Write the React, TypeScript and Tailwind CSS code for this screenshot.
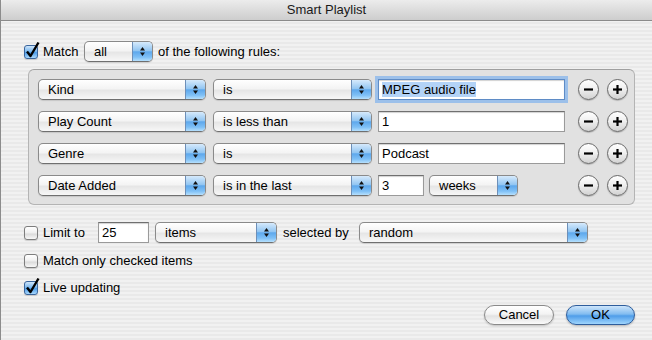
import React from 'react'

const font = { fontFamily: '"Liberation Sans", Arial, sans-serif' }

function Arrows() {
  return (
    <svg width="5" height="9" viewBox="0 0 5 9">
      <path d="M2.5 0L5 3.5H0Z" fill="#111" />
      <path d="M0 5.5H5L2.5 9Z" fill="#111" />
    </svg>
  )
}

function Popup({ label, className = '' }: { label: string; className?: string }) {
  return (
    <div
      className={`flex h-[21px] shrink-0 items-stretch overflow-hidden rounded-[5px] border border-[#8a8a8a] border-b-[#6f6f6f] bg-[linear-gradient(to_bottom,#ffffff_0%,#f4f4f4_45%,#e6e6e6_55%,#f7f7f7_100%)] shadow-[0_1px_1px_rgba(0,0,0,0.12)] ${className}`}
    >
      <span className="flex flex-1 items-center pl-[9px] text-[13px] leading-none text-black">{label}</span>
      <span className="flex w-[20px] items-center justify-center border-l border-[#6d8fb8] bg-[linear-gradient(to_bottom,#d6eafc_0%,#93c6f2_45%,#5ea8ec_52%,#7fc0f6_80%,#b6e0fd_100%)]">
        <Arrows />
      </span>
    </div>
  )
}

function Field({ value, className = '', focused = false }: { value: string; className?: string; focused?: boolean }) {
  return (
    <div
      className={`flex h-[21px] shrink-0 items-center border bg-white pl-[3px] text-[13px] leading-none text-black shadow-[inset_0_1px_1px_rgba(0,0,0,0.18)] ${
        focused
          ? 'border-[#5f8cc6] ring-[3px] ring-[#9cc0ea]'
          : 'border-[#9a9a9a] border-t-[#707070]'
      } ${className}`}
    >
      {focused ? <span className="bg-[#b3d3f7] py-[1px]">{value}</span> : value}
    </div>
  )
}

function RoundButton({ plus }: { plus?: boolean }) {
  return (
    <div className="flex size-[21px] items-center justify-center rounded-full border border-[#6a6a6a] bg-[linear-gradient(to_bottom,#ffffff_0%,#f0f0f0_45%,#d2d2d2_100%)] shadow-[0_1px_1px_rgba(0,0,0,0.2)]">
      <svg width="11" height="11" viewBox="0 0 11 11">
        <path d="M1 5.5H10" stroke="#000" strokeWidth="2.2" />
        {plus && <path d="M5.5 1V10" stroke="#000" strokeWidth="2.2" />}
      </svg>
    </div>
  )
}

function Checkbox({ checked }: { checked?: boolean }) {
  return (
    <div className="relative size-[14px] shrink-0">
      <div
        className={`size-[14px] rounded-[3px] border shadow-[0_1px_1px_rgba(0,0,0,0.15)] ${
          checked
            ? 'border-[#3a659c] bg-[linear-gradient(to_bottom,#cfe6fb_0%,#7ab8ef_45%,#4e9ce8_55%,#a8d8fd_100%)]'
            : 'border-[#7d7d7d] bg-[linear-gradient(to_bottom,#ffffff_0%,#f1f1f1_45%,#dcdcdc_60%,#f8f8f8_100%)]'
        }`}
      />
      {checked && (
        <svg className="absolute -top-[4px] left-0" width="17" height="18" viewBox="0 0 17 18">
          <path d="M3 10.5L6.5 15L14.5 1.5" stroke="#000" strokeWidth="2.4" fill="none" strokeLinejoin="round" />
        </svg>
      )}
    </div>
  )
}

const rules = [
  { field: 'Kind', op: 'is', value: 'MPEG audio file', focused: true },
  { field: 'Play Count', op: 'is less than', value: '1' },
  { field: 'Genre', op: 'is', value: 'Podcast' },
]

export default function App() {
  return (
    <div
      style={font}
      className="relative h-[340px] w-[652px] overflow-hidden border-l border-[#8c8c8c] bg-[repeating-linear-gradient(to_bottom,#f1f1f1_0px,#f1f1f1_2px,#e9e9e9_2px,#e9e9e9_4px)] text-[13px] text-black"
    >
      <div className="h-[21px] rounded-tl-[4px] border-b border-[#8a8a8a] bg-[linear-gradient(to_bottom,#ececec,#cdcdcd)] text-center text-[13px] leading-[20px] text-[#1a1a1a]">
        Smart Playlist
      </div>

      <div className="pl-[23px]">
        <div className="mt-[20px] flex h-[21px] items-center">
          <Checkbox checked />
          <span className="ml-[5px] w-[41px]">Match</span>
          <Popup label="all" className="w-[69px]" />
          <span className="ml-[5px]">of the following rules:</span>
        </div>

        <div className="mt-[7px] ml-[4px] flex h-[136px] w-[607px] flex-col gap-[11px] rounded-[6px] border border-[#b4b4b4] border-t-[#a0a0a0] bg-[#e1e1e1] pt-[9px] pr-[6px] pl-[9px]">
          {rules.map((r) => (
            <div key={r.field} className="flex h-[21px] items-center">
              <Popup label={r.field} className="w-[168px]" />
              <Popup label={r.op} className="ml-[7px] w-[159px]" />
              <Field value={r.value} focused={r.focused} className="ml-[6px] w-[187px]" />
              <div className="ml-auto flex gap-[8px]">
                <RoundButton />
                <RoundButton plus />
              </div>
            </div>
          ))}
          <div className="flex h-[21px] items-center">
            <Popup label="Date Added" className="w-[168px]" />
            <Popup label="is in the last" className="ml-[7px] w-[159px]" />
            <Field value="3" className="ml-[6px] w-[46px]" />
            <Popup label="weeks" className="ml-[5px] w-[89px]" />
            <div className="ml-auto flex gap-[8px]">
              <RoundButton />
              <RoundButton plus />
            </div>
          </div>
        </div>

        <div className="mt-[17px] flex h-[21px] items-center">
          <Checkbox />
          <span className="ml-[5px] w-[55px]">Limit to</span>
          <Field value="25" className="w-[51px]" />
          <Popup label="items" className="ml-[6px] w-[122px]" />
          <span className="ml-[6px] w-[76px]">selected by</span>
          <Popup label="random" className="w-[229px]" />
        </div>

        <div className="mt-[8px] flex h-[20px] items-center">
          <Checkbox />
          <span className="ml-[5px]">Match only checked items</span>
        </div>

        <div className="mt-[7px] flex h-[20px] items-center">
          <Checkbox checked />
          <span className="ml-[5px]">Live updating</span>
        </div>
      </div>

      <div className="mt-[7px] flex h-[20px] justify-end gap-[12px] pr-[17px]">
        <button className="flex h-[20px] w-[70px] items-center justify-center rounded-full border border-[#8a8a8a] bg-[linear-gradient(to_bottom,#ffffff_0%,#f3f3f3_45%,#e2e2e2_55%,#fafafa_100%)] text-[13px] text-black shadow-[0_1px_2px_rgba(0,0,0,0.2)]">
          Cancel
        </button>
        <button className="flex h-[20px] w-[69px] items-center justify-center rounded-full border border-[#2e5d9c] bg-[linear-gradient(to_bottom,#cde5fb_0%,#82bcf0_45%,#4f9de9_55%,#9fd5fd_100%)] text-[13px] text-black shadow-[0_1px_2px_rgba(0,0,0,0.25)]">
          OK
        </button>
      </div>
    </div>
  )
}
